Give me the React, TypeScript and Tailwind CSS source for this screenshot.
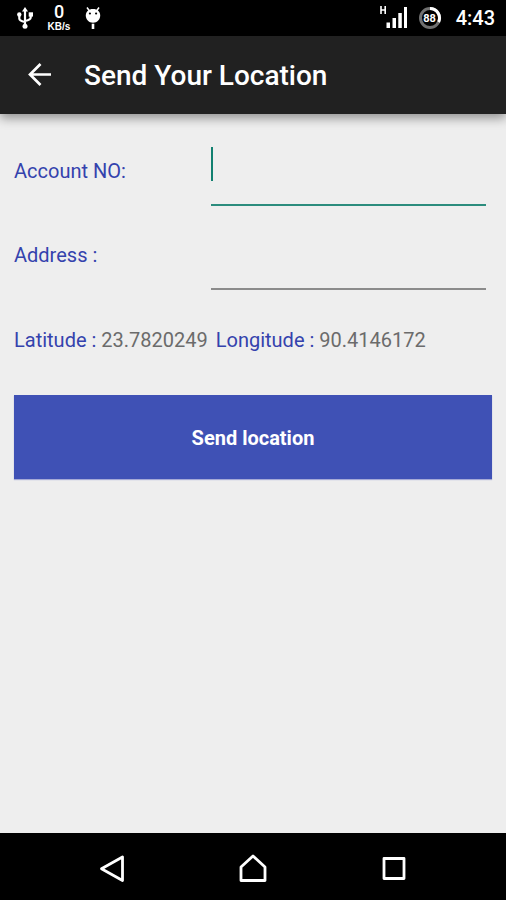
import { useState } from 'react';

const UsbIcon = () => (
  <svg width="16" height="22" viewBox="0 0 16 22" fill="none" stroke="#fff" strokeWidth="2.200">
    <path d="M8 3v16M2.300 8v3.500c0 2 3 3 5.700 3.500M13.700 7v3.500c0 2-3 3-5.700 3.500" />
    <path d="M8 0l3 4.500H5z" fill="#fff" stroke="none" />
    <circle cx="8" cy="19.200" r="2.500" fill="#fff" stroke="none" />
    <circle cx="2.300" cy="7.500" r="2.200" fill="#fff" stroke="none" />
    <path d="M11.700 5.300h4.300v4.300h-4.300z" fill="#fff" stroke="none" />
  </svg>
);

const DebugIcon = () => (
  <svg width="16" height="24" viewBox="0 0 16 24" fill="#fff">
    <path d="M2 1.500l2.500 3.500M14 1.500l-2.500 3.500" stroke="#fff" strokeWidth="1.500" />
    <path d="M8 3c4.300 0 7.200 2.500 7.200 6.500S12.300 16.700 8 16.700.800 13.500.800 9.500 3.700 3 8 3z" />
    <circle cx="4.900" cy="7.500" r="1.100" fill="#000" />
    <circle cx="11.100" cy="7.500" r="1.100" fill="#000" />
    <path d="M6.700 17.700h2.600v5.300H6.700z" />
  </svg>
);

const SignalIcon = () => (
  <svg width="28" height="24" viewBox="0 0 28 24" fill="#fff">
    <path d="M2 0v8M6.200 0v8M2 4h4.200" stroke="#fff" strokeWidth="1.600" />
    <path d="M7.500 16.500h3.500V22H7.500zM13.500 12H17v10h-3.500zM19.300 7h3.500v15h-3.500zM25 1h3v21h-3z" />
  </svg>
);

interface BatteryRingProps {
  level: number;
}

const BatteryRing: React.FC<BatteryRingProps> = ({ level }) => (
  <div className="relative flex h-6 w-6 items-center justify-center">
    <svg className="absolute inset-0" width="24" height="24" viewBox="0 0 24 24" fill="none" strokeWidth="3">
      <circle cx="12" cy="12" r="9.500" stroke="#707070" />
      <path d="M12 2.500a9.500 9.500 0 0 1 8.600 13.500" stroke="#fff" />
    </svg>
    <span className="relative text-[11px] leading-none font-bold">{level}</span>
  </div>
);

const StatusBar = () => (
  <div className="flex h-9 shrink-0 items-center justify-between bg-black pr-[11px] pl-[17px] text-white">
    <div className="flex items-center gap-3.5">
      <UsbIcon />
      <div className="flex w-6 flex-col items-center">
        <span className="text-lg leading-[18px] font-medium">0</span>
        <span className="font-['Liberation_Sans',sans-serif] text-[10px] leading-3 font-bold">KB/s</span>
      </div>
      <DebugIcon />
    </div>
    <div className="flex items-center">
      <SignalIcon />
      <div className="mr-3.5 ml-[11px]">
        <BatteryRing level={88} />
      </div>
      <span className="text-xl leading-none font-medium">4:43</span>
    </div>
  </div>
);

interface FieldProps {
  id: string;
  label: string;
  value: string;
  active: boolean;
  onFocus: () => void;
  onChange: (value: string) => void;
}

const Field: React.FC<FieldProps> = ({ id, label, value, active, onFocus, onChange }) => (
  <div className="flex h-21 items-center">
    <label htmlFor={id} className="w-2/5 pt-0.5 text-[#3442ad]">
      {label}
    </label>
    <div className="relative mx-1.5 h-full flex-1 py-1.5">
      <input
        id={id}
        type="text"
        value={value}
        onFocus={onFocus}
        onChange={e => onChange(e.target.value)}
        className={`h-full w-full border-b-2 pb-4 text-gray-900 outline-none ${
          active ? 'border-[#2b8c7d] caret-transparent' : 'border-[#8b8b8b]'
        }`}
      />
      {/* Caret */}
      {active && value === '' && (
        <span className="pointer-events-none absolute top-[19px] left-0 h-[34px] w-0.5 bg-[#128070]" />
      )}
    </div>
  </div>
);

const App: React.FC = () => {
  const [account, setAccount] = useState('');
  const [address, setAddress] = useState('');
  const [active, setActive] = useState('account');

  return (
    <div className="flex min-h-screen flex-col bg-[#eeeeee] font-[Roboto,sans-serif]">
      <StatusBar />

      {/* App Bar */}
      <header className="flex h-[78px] shrink-0 items-center bg-[#212121] px-6 text-white shadow-[0_4px_10px_rgba(0,0,0,0.4)]">
        <button aria-label="Back" className="flex h-8 w-8 items-center justify-center">
          <svg width="26" height="26" viewBox="0 0 26 26" fill="none" stroke="#fff" strokeWidth="2.700">
            <path d="M24 12.500H3M13.500 2L3 12.500 13.500 23" />
          </svg>
        </button>
        <h1 className="ml-7 pt-0.5 text-[28px] leading-8 font-medium">Send Your Location</h1>
      </header>

      {/* Form */}
      <main className="flex-1 p-3.5 text-xl leading-6">
        <Field
          id="account"
          label="Account NO:"
          value={account}
          active={active === 'account'}
          onFocus={() => setActive('account')}
          onChange={setAccount}
        />
        <Field
          id="address"
          label="Address :"
          value={address}
          active={active === 'address'}
          onFocus={() => setActive('address')}
          onChange={setAddress}
        />

        <div className="flex h-[85px] items-center gap-2 pt-0.5 text-[#3442ad]">
          <p>
            Latitude : <span className="text-[#6b6b6b]">23.7820249</span>
          </p>
          <p>
            Longitude : <span className="text-[#6b6b6b]">90.4146172</span>
          </p>
        </div>

        <button className="mt-3.5 h-21 w-full bg-[#3f51b5] pt-0.5 font-bold text-white shadow-[0_1px_1px_#a5a9d6]">
          Send location
        </button>
      </main>

      {/* Navigation Bar */}
      <nav className="grid h-[67px] shrink-0 grid-cols-3 bg-black px-[42px] pt-1">
        <button aria-label="Go back" className="flex items-center justify-center">
          <svg width="30" height="30" viewBox="0 0 30 30" fill="none" stroke="#fff" strokeWidth="2.800" strokeLinejoin="round">
            <path d="M25.500 3v23.500L4.500 14.700z" />
          </svg>
        </button>
        <button aria-label="Home" className="flex items-center justify-center">
          <svg width="30" height="30" viewBox="0 0 30 30" fill="none" stroke="#fff" strokeWidth="2.800" strokeLinejoin="round">
            <path d="M15 2L27 13v13.500H3V13z" />
          </svg>
        </button>
        <button aria-label="Recent apps" className="flex items-center justify-center">
          <svg width="30" height="30" viewBox="0 0 30 30" fill="none" stroke="#fff" strokeWidth="2.800" strokeLinejoin="round">
            <path d="M5 4.500h20v20H5z" />
          </svg>
        </button>
      </nav>
    </div>
  );
};

export default App;
